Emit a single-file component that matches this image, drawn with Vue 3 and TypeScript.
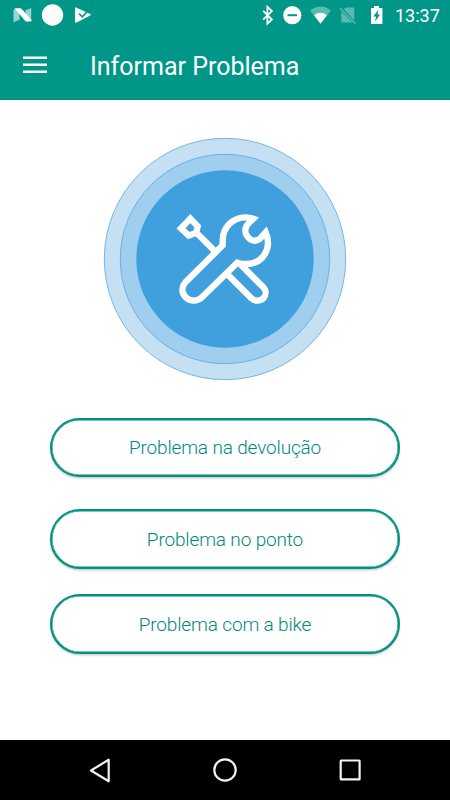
<script setup lang="ts">
interface Problem {
  id: string
  label: string
}

const problems: Problem[] = [
  { id: 'return', label: 'Problema na devolução' },
  { id: 'station', label: 'Problema no ponto' },
  { id: 'bike', label: 'Problema com a bike' },
]
</script>

<template>
  <div class="screen">
    <header class="top">
      <div class="status">
        <svg class="notices" viewBox="0 0 110 30" aria-hidden="true">
          <path d="M13.500 9.500l6-1V20q-3 .3-5 2-1 .5-1-.6zM25.500 10q3-.3 5-1.800.7-.4.700.6V20.500q0 1-1 1h-4.700z" fill="#fff" opacity=".6" />
          <path d="M14.500 8.200h5.500q1 0 1.800.9L32 20.800q-2 .9-4.500.8-1.600 0-2.600-1z" fill="#fff" />
          <circle cx="52.500" cy="15" r="10.700" fill="#fff" />
          <path d="M76 7.500q-1-.8-1 .7v13.300q0 2 1.700 1l13.500-7q1.400-.8 0-1.600z" fill="#fff" />
          <path d="M79 13.500l3.300 3.300 6.700-7" fill="none" stroke="#009688" stroke-width="1.600" />
        </svg>
        <svg class="system" viewBox="0 0 140 30" aria-hidden="true">
          <path d="M3.200 10.800l8.700 8.700-4.500 4.200V6.800l4.500 4.200-8.700 8.700" fill="none" stroke="#fff" stroke-width="1.800" />
          <circle cx="32.300" cy="15.200" r="9.100" fill="#fff" />
          <path d="M27.500 15.200h9.600" stroke="#009688" stroke-width="2" />
          <path d="M60.500 23.800L50 10.500q10.500-8 21 0z" fill="#fff" opacity=".35" />
          <path d="M60.500 23.800L54 15.200q6.500-4.700 13 0z" fill="#fff" />
          <path d="M94.300 20.500V7.500h-8.600l-1.700 1.700zM81.300 11.500v11H92.500z" fill="#fff" opacity=".35" />
          <path d="M80 8.200l15.300 15.300" stroke="#59bab1" stroke-width="1.500" />
          <path d="M111 8h3V6h5v2h3.400v16H111z" fill="#fff" />
          <path d="M118.300 9.800l-5 6.600h2.700l-.9 5.200 5-7h-2.600z" fill="#009688" />
        </svg>
        <span class="clock">13:37</span>
      </div>
      <div class="appbar">
        <button class="menu" aria-label="Menu">
          <svg viewBox="0 0 24 20" aria-hidden="true">
            <path d="M0 2.700h24M0 9.700h24M0 16.700h24" />
          </svg>
        </button>
        <h1>Informar Problema</h1>
      </div>
    </header>

    <main>
      <svg class="hero" viewBox="0 0 244 244" aria-hidden="true">
        <circle cx="122" cy="122" r="120.700" fill="#c5e0f3" stroke="#72b8e7" />
        <circle cx="122" cy="122" r="104.700" fill="#9fceee" stroke="#68b2e3" />
        <circle cx="122" cy="122" r="88.700" fill="#409fdd" />
        <g class="tools" transform="translate(62 63.300) scale(.333333)">
          <path d="M173 135V121C173 82 203 51 242 51C250 51 257 52 265 55L250 70C238 83 239 98 247 108C257 123 275 126 287 113L302 96C323 145 292 191 245 191C236 191 226 190 217 187L111 291C98 304 75 304 62 291C49 278 49 260 62 245Z" />
          <path d="M76 55L98 78L94 97L71 106L48 84ZM94 97L146 149M226 192L295 261C304 270 304 284 295 294C285 304 268 303 259 294L190 225" />
        </g>
      </svg>

      <div class="options">
        <button v-for="problem in problems" :key="problem.id" class="option" :class="problem.id">
          {{ problem.label }}
        </button>
      </div>
    </main>

    <nav class="navbar">
      <svg viewBox="0 0 450 60" aria-hidden="true">
        <path d="M108.700 19.700v21.600L91 30.500z" />
        <circle cx="225" cy="30" r="10.700" />
        <rect x="340.700" y="20.500" width="18.900" height="18.900" rx=".5" />
      </svg>
    </nav>
  </div>
</template>

<style>
body {
  background: #fff;
}
</style>

<style scoped>
.screen {
  display: flex;
  flex-direction: column;
  width: 450px;
  height: 800px;
  background: #fff;
  font-family: Roboto, sans-serif;
}

.top {
  box-sizing: border-box;
  height: 100px;
  background: #009688;
  border-bottom: 1px solid #068878;
}

.status {
  display: flex;
  height: 30px;
  color: #fff;
}

.notices {
  width: 110px;
  height: 30px;
}

.system {
  width: 140px;
  height: 30px;
  margin-left: 150px;
  margin-right: -10px;
}

.clock {
  margin-left: 5px;
  font-size: 18px;
  line-height: 32px;
}

.appbar {
  display: flex;
  align-items: center;
  height: 70px;
  padding-left: 23px;
}

.menu {
  width: 24px;
  height: 20px;
  margin: 0 43px 0 0;
  padding: 0;
  border: 0;
  background: none;
}

.menu svg {
  display: block;
  width: 24px;
  height: 20px;
  stroke: #fff;
  stroke-width: 2.600;
}

h1 {
  margin: 3px 0 0;
  color: #fff;
  font-size: 25px;
  font-weight: 400;
  line-height: 32px;
}

main {
  display: flex;
  flex: 1;
  flex-direction: column;
  align-items: center;
}

.hero {
  width: 244px;
  height: 244px;
  margin-top: 37px;
}

.tools path {
  fill: none;
  stroke: #fff;
  stroke-width: 19;
}

.options {
  display: flex;
  flex-direction: column;
  width: 350px;
  margin-top: 37px;
}

.option {
  height: 60px;
  padding: 0;
  border: 2px solid #009183;
  border-radius: 30px;
  background: #fff;
  box-shadow: inset 0 0 0 0.500px #009183, 0 1.500px 2px #0003;
  color: #00897b;
  font-family: Roboto, sans-serif;
  font-size: 19px;
  font-weight: 300;
  letter-spacing: -0.150px;
}

.return {
  height: 59px;
}

.station {
  margin-top: 32px;
}

.bike {
  margin-top: 25px;
}

.navbar {
  height: 60px;
  background: #000;
}

.navbar svg {
  display: block;
  width: 450px;
  height: 60px;
  fill: none;
  stroke: #f2f2f2;
  stroke-width: 2.200;
  stroke-linejoin: round;
}
</style>
